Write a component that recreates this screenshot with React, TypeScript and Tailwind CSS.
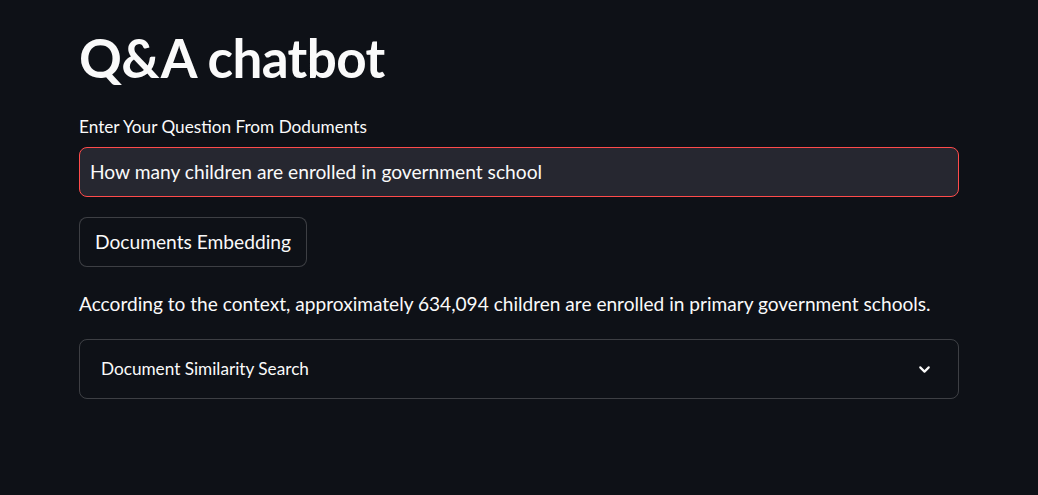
import { ChevronDown } from "lucide-react";

export default function App() {
  return (
    <div
      className="min-h-[495px] bg-[#0e1117] text-[#fafafa]"
      style={{ fontFamily: "Lato, 'Noto Sans', sans-serif" }}
    >
      <div className="w-[880px] ml-[79px] pt-[26px] flex flex-col">
        {/* Title */}
        <h1 className="text-[53px] leading-[64px] font-bold tracking-[-0.6px]">Q&amp;A chatbot</h1>

        {/* Question input */}
        <label className="mt-[26px] text-[17.2px] leading-[22px]">Enter Your Question From Doduments</label>
        <div className="mt-[9px] h-[50px] rounded-[8px] border border-[#ff4b4b] bg-[#262730] flex items-center px-[10px]">
          <span className="text-[19.2px]">How many children are enrolled in government school</span>
        </div>

        {/* Button */}
        <div className="mt-[20px]">
          <button className="h-[50px] px-[15px] rounded-[8px] border border-[#fafafa]/20 bg-[#0e1117] text-[19.2px]">
            Documents Embedding
          </button>
        </div>

        {/* Answer */}
        <p className="mt-[24px] text-[19.1px] leading-[26px]">
          According to the context, approximately 634,094 children are enrolled in primary government schools.
        </p>

        {/* Expander */}
        <div className="mt-[22px] h-[60px] rounded-[8px] border border-[#fafafa]/20 flex items-center justify-between pl-[21px] pr-[25px]">
          <span className="text-[17.2px]">Document Similarity Search</span>
          <ChevronDown size={17} strokeWidth={3} />
        </div>
      </div>
    </div>
  );
}
